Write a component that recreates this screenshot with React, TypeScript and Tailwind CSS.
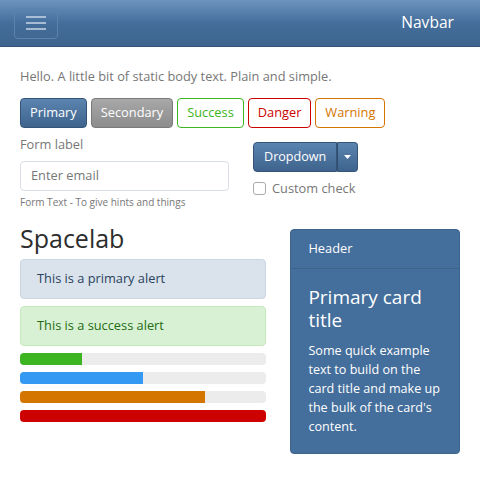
import React from 'react';

const font = { fontFamily: '"Open Sans", "Liberation Sans", sans-serif' };

const primaryBtn = 'border border-[#345578] bg-gradient-to-b from-[#5b84b0] to-[#3e648d] text-white';

function Navbar() {
  return (
    <div className="flex h-[47px] items-center justify-between border-b border-[#345578] bg-gradient-to-b from-[#6d94bf] via-[#446e9b] to-[#3e648d] pl-[14px] pr-[26px]">
      <button className="flex h-[31px] w-[44px] items-center justify-center rounded-[4px] border border-[#5d82ab]">
        <svg width="20" height="16" viewBox="0 0 20 16">
          <path d="M0 2h20M0 8h20M0 14h20" stroke="#c7d5e6" strokeWidth="1.5" />
        </svg>
      </button>
      <span className="text-[15.6px] text-white">Navbar</span>
    </div>
  );
}

const progress = [
  ['w-[25%]', 'bg-[#3cb521]'],
  ['w-[50%]', 'bg-[#3399f3]'],
  ['w-[75%]', 'bg-[#d47500]'],
  ['w-full', 'bg-[#cd0200]'],
];

export default function App() {
  return (
    <div className="h-[486px] w-[480px] bg-white text-[12.8px] text-[#777]" style={font}>
      <Navbar />
      <div className="px-[20px]">
        <p className="mt-[20px] leading-[18px]">Hello. A little bit of static body text. Plain and simple.</p>
        <div className="mt-[13px] flex gap-[4px]">
          <button className={`h-[30px] rounded-[4px] px-[9px] ${primaryBtn}`}>Primary</button>
          <button className="h-[30px] rounded-[4px] border border-[#7a7a7a] bg-gradient-to-b from-[#a8a8a8] to-[#8c8c8c] px-[9px] text-white">Secondary</button>
          <button className="h-[30px] rounded-[4px] border border-[#3cb521] bg-white px-[9px] text-[#3cb521]">Success</button>
          <button className="h-[30px] rounded-[4px] border border-[#cd0200] bg-white px-[9px] text-[#cd0200]">Danger</button>
          <button className="h-[30px] rounded-[4px] border border-[#d47500] bg-white px-[9px] text-[#d47500]">Warning</button>
        </div>
        <div className="mt-[7px] flex">
          <div className="w-[209px]">
            <div className="leading-[18px]">Form label</div>
            <div className="mt-[8px] flex h-[30px] items-center rounded-[4px] border border-[#d9dee5] px-[10px]">Enter email</div>
            <div className="mt-[4px] text-[10px] leading-[14px]">Form Text - To give hints and things</div>
          </div>
          <div className="ml-[24px] pt-[7px]">
            <div className="flex h-[30px] text-[12.6px]">
              <button className={`rounded-l-[4px] px-[10px] ${primaryBtn}`}>Dropdown</button>
              <button className={`flex w-[21px] items-center justify-center rounded-r-[4px] border-l-[#2f4d6d] ${primaryBtn}`}>
                <svg width="7" height="4" viewBox="0 0 7 4"><path d="M0 0h7L3.5 4z" fill="#fff" /></svg>
              </button>
            </div>
            <label className="mt-[7px] flex items-center gap-[6px] leading-[18px]">
              <span className="h-[13px] w-[13px] rounded-[3px] border border-[#aaa] bg-white" />
              Custom check
            </label>
          </div>
        </div>
        <div className="mt-[20px] flex gap-[24px]">
          <div className="w-[247px]">
            <h1 className="-mt-[6px] text-[25px] leading-[30px] text-[#2d2d2d]">Spacelab</h1>
            <div className="mt-[6px] flex h-[40px] items-center rounded-[4px] border border-[#cbd6e2] bg-[#dae2eb] px-[16px] text-[#29425d]">This is a primary alert</div>
            <div className="mt-[7px] flex h-[40px] items-center rounded-[4px] border border-[#c5eabc] bg-[#d8f0d3] px-[16px] text-[#246d14]">This is a success alert</div>
            <div className="mt-[7px] flex flex-col gap-[7px]">
              {progress.map(([w, c], i) => (
                <div key={i} className="h-[12px] overflow-hidden rounded-[4px] bg-[#ececec]">
                  <div className={`h-full ${w} ${c}`} />
                </div>
              ))}
            </div>
          </div>
          <div className="w-[170px] self-start overflow-hidden rounded-[4px] border border-[#3e648d] bg-[#446e9b] text-white">
            <div className="flex h-[39px] items-center border-b border-[#3d6389] px-[17px]">Header</div>
            <div className="px-[17px] pb-[17px] pt-[17px]">
              <h2 className="text-[19px] leading-[23px]">Primary card title</h2>
              <p className="mt-[9px] text-[12.6px] leading-[19px]">Some quick example text to build on the card title and make up the bulk of the card's content.</p>
            </div>
          </div>
        </div>
      </div>
    </div>
  );
}
